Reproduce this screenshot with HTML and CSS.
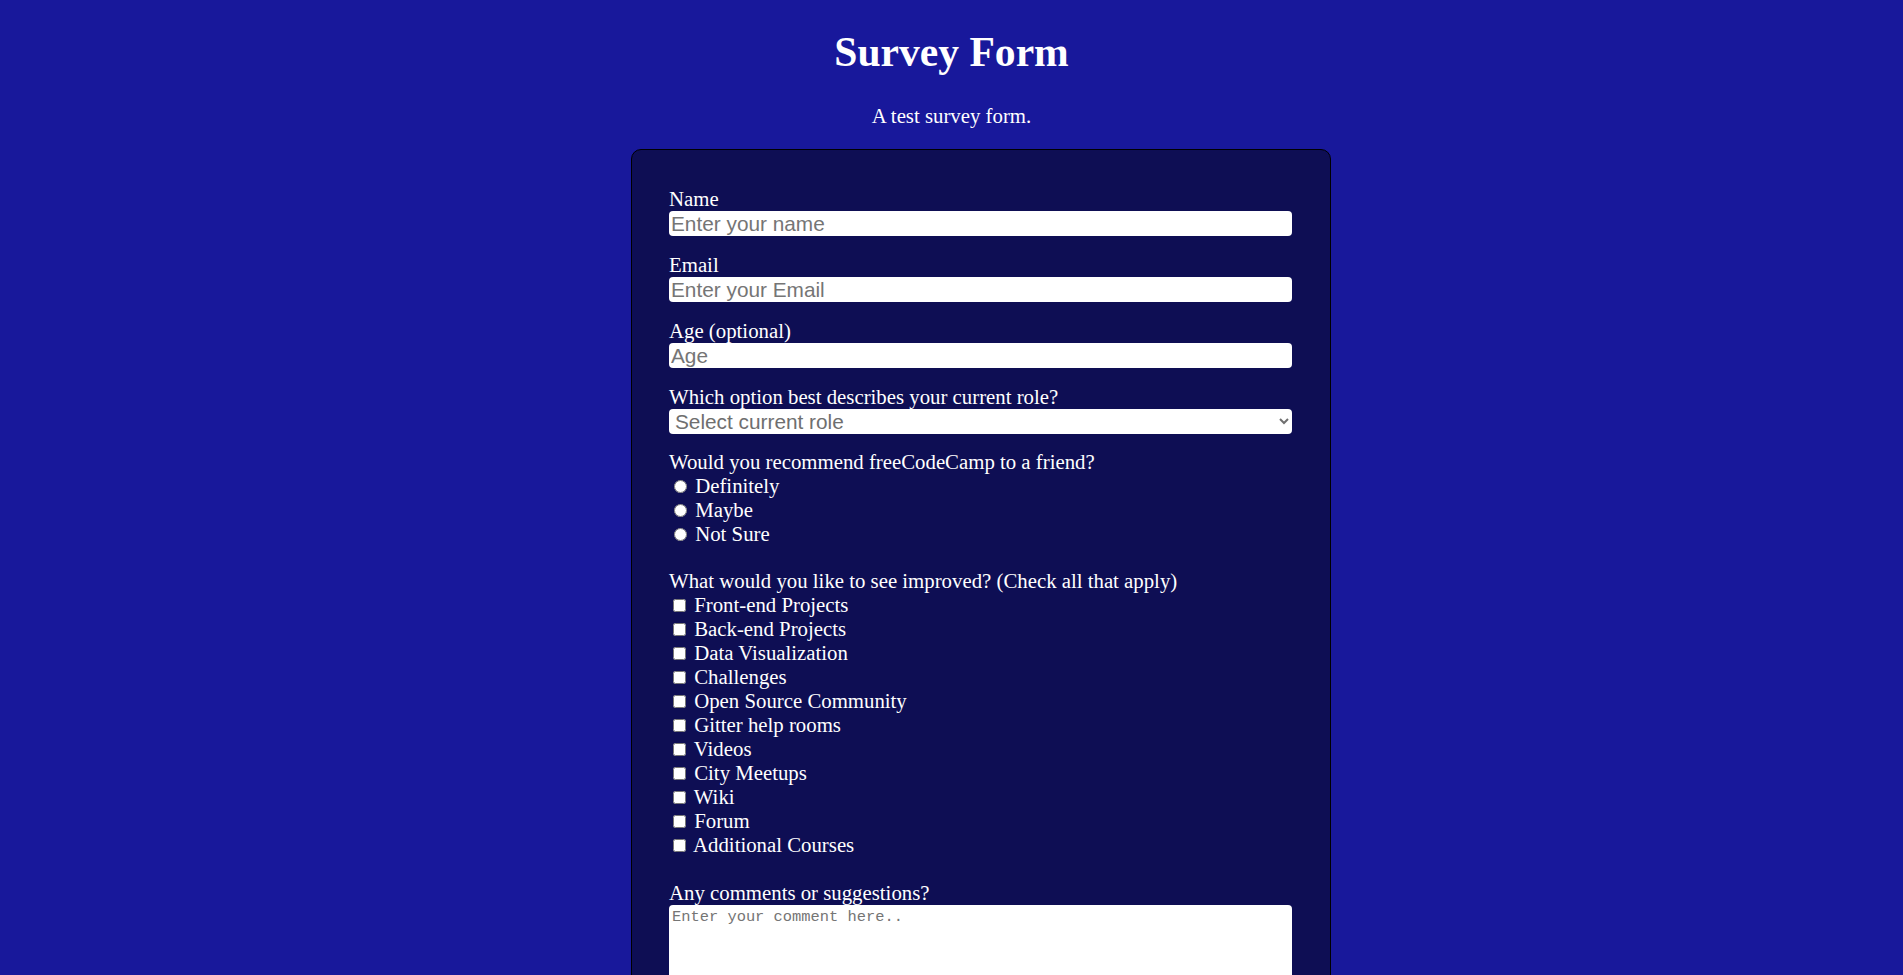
FILE: index.html
```html
<!DOCTYPE html>
<html lang="en">
<head>
<meta charset="utf-8">
<title>Survey Form</title>
<link rel="stylesheet" href="styles.css">
</head>
<body>
<header class="page-header">
  <h1 id="title" class="title">Survey Form</h1>
  <p id="description" class="description">A test survey form.</p>
</header>
<form id="survey-form" class="survey">
  <div class="group">
    <label class="field-label" for="name" id="name-label">Name</label>
    <input class="field" type="text" id="name" placeholder="Enter your name">
  </div>
  <div class="group">
    <label class="field-label" for="email" id="email-label">Email</label>
    <input class="field" type="email" id="email" placeholder="Enter your Email">
  </div>
  <div class="group">
    <label class="field-label" for="number" id="number-label">Age (optional)</label>
    <input class="field" type="number" id="number" placeholder="Age">
  </div>
  <div class="group group-select">
    <label class="field-label" for="dropdown">Which option best describes your current role?</label>
    <select class="field select" id="dropdown">
      <option value="" selected>Select current role</option>
      <option>Student</option>
      <option>Full Time Job</option>
      <option>Full Time Learner</option>
      <option>Prefer not to say</option>
      <option>Other</option>
    </select>
  </div>
  <div class="group group-radio">
    <p class="field-label">Would you recommend freeCodeCamp to a friend?</p>
    <label class="choice"><input type="radio" name="recommend" value="definitely"> Definitely</label>
    <label class="choice"><input type="radio" name="recommend" value="maybe"> Maybe</label>
    <label class="choice"><input type="radio" name="recommend" value="not-sure"> Not Sure</label>
  </div>
  <div class="group group-check">
    <p class="field-label">What would you like to see improved? (Check all that apply)</p>
    <label class="choice"><input type="checkbox" value="front-end-projects"> Front-end Projects</label>
    <label class="choice"><input type="checkbox" value="back-end-projects"> Back-end Projects</label>
    <label class="choice"><input type="checkbox" value="data-visualization"> Data Visualization</label>
    <label class="choice"><input type="checkbox" value="challenges"> Challenges</label>
    <label class="choice"><input type="checkbox" value="open-source-community"> Open Source Community</label>
    <label class="choice"><input type="checkbox" value="gitter-help-rooms"> Gitter help rooms</label>
    <label class="choice"><input type="checkbox" value="videos"> Videos</label>
    <label class="choice"><input type="checkbox" value="city-meetups"> City Meetups</label>
    <label class="choice"><input type="checkbox" value="wiki"> Wiki</label>
    <label class="choice"><input type="checkbox" value="forum"> Forum</label>
    <label class="choice"><input type="checkbox" value="additional-courses"> Additional Courses</label>
  </div>
  <div class="group">
    <label class="field-label" for="comments">Any comments or suggestions?</label>
    <textarea class="field comments" id="comments" placeholder="Enter your comment here.."></textarea>
  </div>
  <div class="group">
    <button type="submit" id="submit" class="submit">Submit</button>
  </div>
</form>
</body>
</html>
```
FILE: styles.css
```css
html, body {
  margin: 0;
  padding: 0;
}

body {
  background: #18189b;
  color: #ffffff;
  font-family: "Liberation Serif", "Times New Roman", serif;
  font-size: 20.8px;
  line-height: 24px;
}

.page-header {
  text-align: center;
}

.title {
  margin: 27.9px 0 0;
  font-size: 41.6px;
  line-height: 48px;
  font-weight: bold;
}

.description {
  margin: 27.9px 0 21px;
  line-height: 24px;
}

.survey {
  box-sizing: border-box;
  width: 700px;
  margin: 0 0 40px calc(50% - 320.5px);
  padding: 37px 38px 37px 37px;
  background: #0e0e54;
  border: 1px solid #000000;
  border-radius: 10px;
}

.group {
  margin: 0 0 17px;
}

.group-select {
  margin-bottom: 16px;
}

.group-radio {
  margin-bottom: 23px;
}

.group-check {
  margin-bottom: 24px;
}

.field-label {
  display: block;
  margin: 0;
  height: 24px;
  line-height: 24px;
}

.field {
  display: block;
  box-sizing: border-box;
  width: 100%;
  height: 25px;
  margin: 0;
  padding: 2px 2px 0;
  border: none;
  border-radius: 4px;
  background: #ffffff;
  color: #000000;
  font-family: "Liberation Sans", Arial, sans-serif;
  font-size: 20.8px;
  line-height: 23px;
}

.field::placeholder {
  color: #757575;
}

.select {
  color: #6f6f6f;
  padding: 0 2px;
}

.choice {
  display: block;
  height: 24px;
  line-height: 24px;
}

.comments {
  height: 150px;
  padding: 4px 2px 2px 3px;
  font-family: "Liberation Mono", "DejaVu Sans Mono", monospace;
  font-size: 15.4px;
  line-height: 17px;
  resize: vertical;
}

.submit {
  display: block;
  width: 100%;
  height: 40px;
  border: none;
  border-radius: 4px;
  background: #37af65;
  color: #ffffff;
  font-family: "Liberation Sans", Arial, sans-serif;
  font-size: 20.8px;
}
```
